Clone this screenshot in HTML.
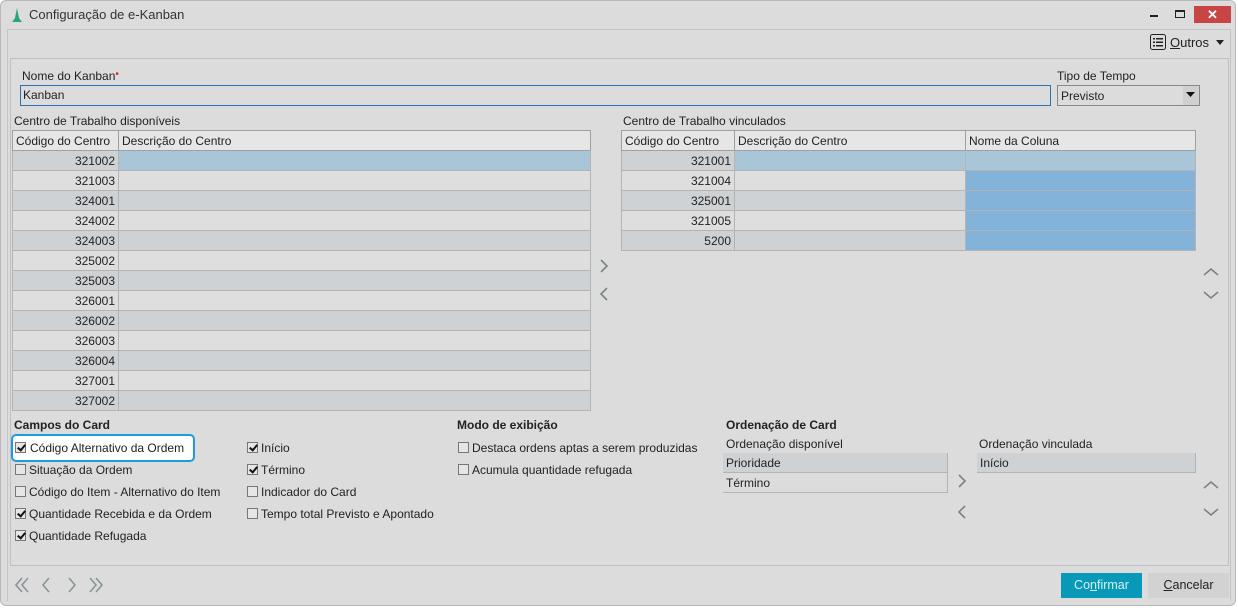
<!DOCTYPE html>
<html><head><meta charset="utf-8"><style>
*{margin:0;padding:0;box-sizing:border-box}
body{width:1238px;height:608px;background:#fff;font-family:"Liberation Sans",sans-serif;font-size:12px;color:#222;position:relative;overflow:hidden}
.a{position:absolute}
.win{left:0;top:0;width:1236px;height:606px;background:#dcdcdc;border:1px solid #b8b8b8;border-radius:6px}
.t{white-space:nowrap}
table{border-collapse:collapse;position:absolute;table-layout:fixed}
td{height:20px;border:1px solid #b4b4b4;padding:0 3px;white-space:nowrap;overflow:hidden}
th{height:20px;border:1px solid #a0a0a0;background:#e6e6e6;font-weight:normal;text-align:left;padding:0 3px}
td.c{text-align:right}
tr.d td{background:#cfd2d5}
tr.l td{background:#dedede}
tr.s td{background:#a8c6d7}
.cb{position:absolute;width:11px;height:11px;border:1px solid #777;background:#e6e6e6}
.cb.on::after{content:"";position:absolute;left:3px;top:0px;width:3px;height:6px;border:solid #111;border-width:0 2px 2px 0;transform:rotate(40deg)}
.lbl{position:absolute;white-space:nowrap}
.b{font-weight:bold}
</style></head><body>
<div class="a win"></div>
<!-- title -->
<svg class="a" style="left:11px;top:7px" width="12" height="16"><path d="M6 1 L8 11 L11 15 L1 15 L4 11 Z" fill="#2aa57a"/></svg>
<div class="a t" style="left:29px;top:7px;font-size:13px;color:#333">Configuração de e-Kanban</div>
<div class="a" style="left:1150px;top:15px;width:8px;height:2px;background:#222"></div>
<div class="a" style="left:1175px;top:10px;width:10px;height:8px;border:1px solid #222;border-top-width:2px"></div>
<div class="a" style="left:1194px;top:6px;width:37px;height:17px;background:#c94444;color:#fff;text-align:center;font-size:13px;line-height:17px;font-weight:bold">✕</div>
<div class="a" style="left:7px;top:29px;width:1224px;height:572px;border:1px solid #c4c4c4;border-bottom:none"></div>
<!-- Outros -->
<svg class="a" style="left:1150px;top:34px" width="16" height="16"><rect x="0.5" y="0.5" width="15" height="15" rx="2" fill="none" stroke="#222"/><g fill="#222"><rect x="3" y="4" width="2" height="1.5"/><rect x="6" y="4" width="7" height="1.5"/><rect x="3" y="7.5" width="2" height="1.5"/><rect x="6" y="7.5" width="7" height="1.5"/><rect x="3" y="11" width="2" height="1.5"/><rect x="6" y="11" width="7" height="1.5"/></g></svg>
<div class="a t" style="left:1170px;top:35px;font-size:13px"><u>O</u>utros</div>
<svg class="a" style="left:1216px;top:40px" width="9" height="6"><path d="M0 0 L8 0 L4 5Z" fill="#222"/></svg>
<!-- inner frame -->
<div class="a" style="left:10px;top:58px;width:1219px;height:508px;border:1px solid #c0c0c0"></div>
<div class="lbl" style="left:22px;top:69px">Nome do Kanban<span style="color:#e02020;font-size:10px;vertical-align:top">•</span></div>
<div class="a" style="left:20px;top:85px;width:1031px;height:21px;border:1px solid #2b6fb4;background:#dcdcdc"></div>
<div class="lbl" style="left:23px;top:88px">Kanban</div>
<div class="lbl" style="left:1057px;top:69px">Tipo de Tempo</div>
<div class="a" style="left:1057px;top:85px;width:143px;height:21px;border:1px solid #888;background:#dcdcdc"></div>
<div class="lbl" style="left:1061px;top:89px">Previsto</div>
<div class="a" style="left:1183px;top:86px;width:16px;height:19px;background:#d0d0d0"></div>
<svg class="a" style="left:1186px;top:92px" width="10" height="6"><path d="M0 0 L9 0 L4.5 5Z" fill="#111"/></svg>
<!-- left table -->
<div class="lbl" style="left:14px;top:114px">Centro de Trabalho disponíveis</div>
<table style="left:12px;top:130px;width:579px">
<colgroup><col style="width:106px"><col></colgroup>
<tr><th>Código do Centro</th><th>Descrição do Centro</th></tr>
<tr class="s"><td class="c" style="background:#cfd2d5">321002</td><td></td></tr>
<tr class="l"><td class="c">321003</td><td></td></tr>
<tr class="d"><td class="c">324001</td><td></td></tr>
<tr class="l"><td class="c">324002</td><td></td></tr>
<tr class="d"><td class="c">324003</td><td></td></tr>
<tr class="l"><td class="c">325002</td><td></td></tr>
<tr class="d"><td class="c">325003</td><td></td></tr>
<tr class="l"><td class="c">326001</td><td></td></tr>
<tr class="d"><td class="c">326002</td><td></td></tr>
<tr class="l"><td class="c">326003</td><td></td></tr>
<tr class="d"><td class="c">326004</td><td></td></tr>
<tr class="l"><td class="c">327001</td><td></td></tr>
<tr class="d"><td class="c" style="height:19px">327002</td><td></td></tr>
</table>
<!-- arrows middle -->
<svg class="a" style="left:598px;top:259px" width="12" height="46"><path d="M3 1 L9 7 L3 13 M9 29 L3 35 L9 41" fill="none" stroke="#7a8486" stroke-width="1.6"/></svg>
<!-- right table -->
<div class="lbl" style="left:623px;top:114px">Centro de Trabalho vinculados</div>
<table style="left:621px;top:130px;width:575px">
<colgroup><col style="width:113px"><col style="width:231px"><col></colgroup>
<tr><th>Código do Centro</th><th>Descrição do Centro</th><th>Nome da Coluna</th></tr>
<tr class="s"><td class="c" style="background:#cfd2d5">321001</td><td></td><td></td></tr>
<tr class="l"><td class="c">321004</td><td></td><td style="background:#84b3d9"></td></tr>
<tr class="d"><td class="c">325001</td><td></td><td style="background:#84b3d9"></td></tr>
<tr class="l"><td class="c">321005</td><td></td><td style="background:#84b3d9"></td></tr>
<tr class="d"><td class="c">5200</td><td></td><td style="background:#84b3d9"></td></tr>
</table>
<svg class="a" style="left:1203px;top:267px" width="16" height="34"><path d="M1 8 L8 2 L15 8 M1 25 L8 31 L15 25" fill="none" stroke="#7a8486" stroke-width="1.6"/></svg>
<!-- Campos do card -->
<div class="lbl b" style="left:14px;top:418px">Campos do Card</div>
<div class="a" style="left:11px;top:434px;width:184px;height:28px;border:2px solid #1e9be0;border-radius:5px;background:#fff"></div>
<div class="cb on" style="left:15px;top:442px"></div><div class="lbl" style="left:30px;top:441px">Código Alternativo da Ordem</div>
<div class="cb" style="left:15px;top:464px"></div><div class="lbl" style="left:29px;top:463px">Situação da Ordem</div>
<div class="cb" style="left:15px;top:486px"></div><div class="lbl" style="left:29px;top:485px">Código do Item - Alternativo do Item</div>
<div class="cb on" style="left:15px;top:508px"></div><div class="lbl" style="left:29px;top:507px">Quantidade Recebida e da Ordem</div>
<div class="cb on" style="left:15px;top:530px"></div><div class="lbl" style="left:29px;top:529px">Quantidade Refugada</div>
<div class="cb on" style="left:247px;top:442px"></div><div class="lbl" style="left:261px;top:441px">Início</div>
<div class="cb on" style="left:247px;top:464px"></div><div class="lbl" style="left:261px;top:463px">Término</div>
<div class="cb" style="left:247px;top:486px"></div><div class="lbl" style="left:261px;top:485px">Indicador do Card</div>
<div class="cb" style="left:247px;top:508px"></div><div class="lbl" style="left:261px;top:507px">Tempo total Previsto e Apontado</div>
<!-- Modo -->
<div class="lbl b" style="left:457px;top:418px">Modo de exibição</div>
<div class="cb" style="left:458px;top:442px"></div><div class="lbl" style="left:472px;top:441px">Destaca ordens aptas a serem produzidas</div>
<div class="cb" style="left:458px;top:464px"></div><div class="lbl" style="left:472px;top:463px">Acumula quantidade refugada</div>
<!-- Ordenação -->
<div class="lbl b" style="left:726px;top:418px">Ordenação de Card</div>
<div class="lbl" style="left:726px;top:437px">Ordenação disponível</div>
<div class="a" style="left:723px;top:453px;width:225px;height:20px;background:#cfd2d5;border-bottom:1px solid #b4b4b4;border-right:1px solid #b4b4b4"></div>
<div class="lbl" style="left:726px;top:456px">Prioridade</div>
<div class="a" style="left:723px;top:473px;width:225px;height:20px;border-bottom:1px solid #b4b4b4;border-right:1px solid #b4b4b4"></div>
<div class="lbl" style="left:726px;top:476px">Término</div>
<svg class="a" style="left:956px;top:474px" width="12" height="46"><path d="M3 1 L9 7 L3 13 M9 32 L3 38 L9 44" fill="none" stroke="#7a8486" stroke-width="1.6"/></svg>
<div class="lbl" style="left:979px;top:437px">Ordenação vinculada</div>
<div class="a" style="left:977px;top:453px;width:219px;height:20px;background:#cfd2d5;border-bottom:1px solid #b4b4b4;border-right:1px solid #b4b4b4"></div>
<div class="lbl" style="left:980px;top:456px">Início</div>
<svg class="a" style="left:1203px;top:480px" width="16" height="38"><path d="M1 8 L8 2 L15 8 M1 29 L8 35 L15 29" fill="none" stroke="#7a8486" stroke-width="1.6"/></svg>
<!-- bottom nav -->
<svg class="a" style="left:14px;top:576px" width="94" height="18"><g fill="none" stroke="#8a9496" stroke-width="1.6"><path d="M8 2 L2 9 L8 16 M14 2 L8 9 L14 16"/><path d="M35 2 L29 9 L35 16"/><path d="M55 2 L61 9 L55 16"/><path d="M76 2 L82 9 L76 16 M82 2 L88 9 L82 16"/></g></svg>
<div class="a" style="left:1061px;top:573px;width:81px;height:25px;background:#0899b8;color:#d8eef4;text-align:center;line-height:25px;font-size:12.5px">Co<u>n</u>firmar</div>
<div class="a" style="left:1148px;top:573px;width:81px;height:25px;background:#d2d2d2;text-align:center;line-height:25px;font-size:12.5px"><u>C</u>ancelar</div>
</body></html>
